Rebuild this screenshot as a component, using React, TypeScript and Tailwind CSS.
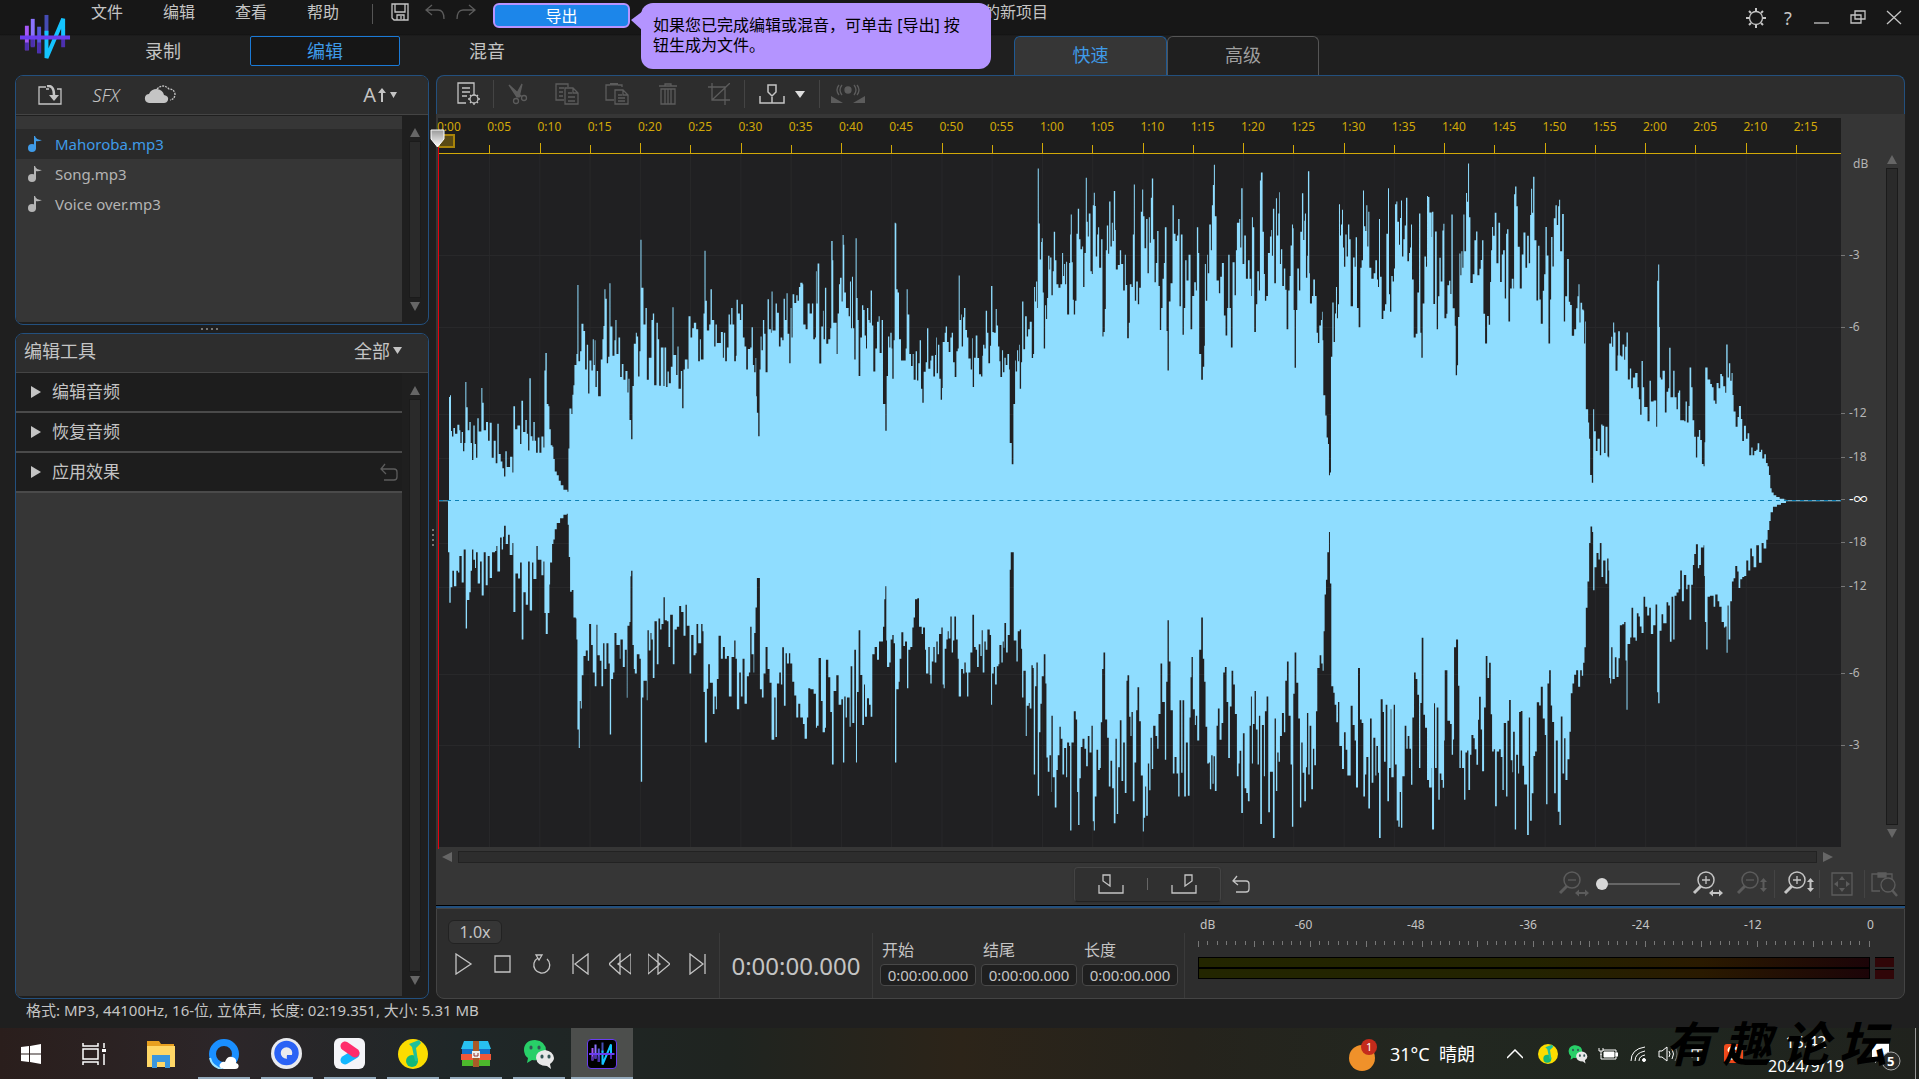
import React, { useState } from 'react';
import clsx from 'clsx';

/* ---------- data ---------- */

const menus = ['文件', '编辑', '查看', '帮助'];
const modes = ['录制', '编辑', '混音'];
const files = ['Mahoroba.mp3', 'Song.mp3', 'Voice over.mp3'];
const sections = ['编辑音频', '恢复音频', '应用效果'];

// one ruler label every five seconds
const rulerMarks = Array.from({ length: 28 }, (_, i) => {
  const s = i * 5;
  return `${Math.floor(s / 60)}:${String(s % 60).padStart(2, '0')}`;
});

// distance of each level from the one above it
const levels = [
  { label: 'dB', gap: 10, tick: false },
  { label: '-3', gap: 91, tick: true },
  { label: '-6', gap: 72, tick: true },
  { label: '-12', gap: 86, tick: true },
  { label: '-18', gap: 44, tick: true },
  { label: '-∞', gap: 42, tick: true },
  { label: '-18', gap: 43, tick: true },
  { label: '-12', gap: 44, tick: true },
  { label: '-6', gap: 87, tick: true },
  { label: '-3', gap: 72, tick: true },
];

const meterMarks = ['-60', '-48', '-36', '-24', '-12', '0'];

// Envelope of the clip: pairs of position and level, in three blocks that each have their own scale
const blocks = [
  {
    x: -8, y: -14, sx: 3, sy: 2.178, end: 1500,
    top: `24 785 54 785 57 560 60 556 63 634 66 646 70 627 75 640 82 620 88 632 91 660 95 636 99 678 103 660 106 527 109 582 113 632 118 614 122 660 126 697 130 622 134 662 138 692 142 606 146 635 151 635 154 540 157 572 161 632 168 614 174 655 179 616 185 692 191 655 197 704 202 618 206 684 212 700 217 715 222 733 226 678 230 712 236 712 240 690 247 724 250 580 255 630 262 622 270 662 274 568 279 636 286 610 290 640 294 676 298 519 302 645 307 655 310 614 314 655 318 681 323 648 328 681 334 646 340 670 343 502 346 464 350 575 355 580 358 630 362 665 367 668 370 695 374 722 380 730 386 742 392 752 400 762 412 766 415 672 418 585 424 597 427 555 430 534 433 490 439 466 442 316 445 482 450 460 454 400 460 416 465 500 470 446 474 552 478 480 484 502 488 434 491 490 494 436 496 538 500 503 504 558 508 558 512 478 517 434 520 405 523 325 526 346 530 486 534 472 538 312 541 406 547 470 553 436 556 392 559 466 565 430 570 516 575 488 580 522 586 503 592 550 595 520 598 610 603 652 607 536 611 444 617 420 620 428 624 515 628 460 631 217 634 322 640 402 646 366 650 522 656 474 660 474 664 392 668 378 672 534 679 398 683 434 687 535 692 452 696 452 700 536 703 452 708 538 712 504 716 530 722 494 727 364 730 468 738 512 742 450 745 542 752 503 756 584 760 500 764 478 772 498 775 384 781 430 786 410 791 398 798 412 804 482 809 434 812 478 817 478 820 378 823 241 826 350 830 415 837 402 841 325 845 392 852 450 856 402 860 442 865 442 872 418 878 474 881 420 885 482 890 452 895 380 899 402 903 366 907 402 912 482 917 470 919 348 923 378 929 392 933 358 938 430 943 450 948 500 953 455 960 452 964 408 968 490 972 506 976 475 978 558 980 594 984 645 988 500 991 428 994 458 998 392 1002 422 1006 506 1012 347 1016 412 1022 420 1024 330 1027 415 1033 415 1036 356 1040 376 1046 450 1051 430 1056 436 1060 346 1064 392 1069 334 1072 422 1077 486 1081 366 1084 430 1087 336 1092 355 1098 338 1102 350 1106 320 1110 311 1117 314 1119 402 1126 412 1132 356 1138 378 1143 378 1145 356 1149 434 1154 430 1157 286 1159 356 1162 269 1167 487 1173 406 1178 372 1180 434 1184 322 1188 444 1194 434 1200 410 1203 220 1207 262 1209 398 1215 398 1219 466 1222 378 1226 314 1229 300 1234 352 1237 207 1240 228 1242 332 1247 366 1252 366 1255 384 1259 308 1262 410 1265 298 1268 410 1272 478 1276 214 1279 344 1282 392 1285 514 1290 430 1295 360 1299 370 1303 426 1307 454 1310 366 1314 392 1318 398 1321 328 1325 404 1329 504 1335 454 1340 396 1345 384 1348 464 1354 392 1358 575 1365 633 1369 514 1373 428 1377 452 1380 420 1384 454 1386 520 1390 436 1393 180 1396 182 1398 325 1402 332 1406 434 1412 480 1420 480 1426 454 1429 325 1432 380 1437 466 1442 492 1447 466 1450 522 1456 460 1460 524 1464 486 1468 436 1472 542 1476 572 1480 505 1486 484 1490 410 1494 498`,
    bottom: `24 787 54 898 58 1008 62 974 67 938 72 972 79 938 84 942 88 906 95 964 101 892 107 1064 111 1002 118 985 122 938 126 892 130 914 135 932 138 898 143 966 150 918 155 992 161 898 167 970 173 906 179 954 186 898 195 895 199 884 202 940 210 866 215 892 219 864 222 840 227 880 234 860 239 904 247 878 250 1028 256 944 264 955 270 920 275 1088 280 985 287 1012 294 918 299 1025 306 920 310 956 319 884 323 914 330 914 334 948 340 918 343 1030 347 1076 353 1030 358 968 360 920 366 880 370 870 374 848 380 834 390 824 400 816 410 814 413 838 416 908 420 984 425 980 428 980 430 1040 437 1042 439 1088 442 1284 446 1324 449 1222 452 1238 455 1166 460 1124 467 1112 473 1134 477 1054 483 1100 488 1160 494 1190 499 1056 502 1122 509 1134 514 1190 519 1096 523 1152 529 1096 535 1140 539 1295 543 1174 549 1160 553 1074 559 1100 565 1100 569 1130 571 1088 578 1148 584 1110 590 1215 592 1058 598 1050 601 950 603 938 607 1100 611 1152 614 1162 620 1120 628 1130 632 1398 636 1214 640 1178 645 1178 650 1220 652 1068 656 1112 661 1074 664 1088 668 1172 673 1048 680 1142 685 1042 690 1066 694 1054 700 996 704 1046 710 1048 715 1104 720 1034 728 1142 733 1066 740 1060 747 1015 753 1028 760 1080 766 1012 770 1058 778 1162 783 1078 790 1122 796 1118 799 1054 804 1096 813 1054 817 1070 820 1202 824 1312 830 1195 834 1142 839 1182 848 1250 853 1212 857 1240 860 1174 865 1080 872 1130 878 1104 884 1130 890 1124 896 1212 904 1126 912 1090 916 1130 920 1240 927 1160 932 1212 937 1130 943 1228 950 1168 956 1160 960 1060 964 1120 970 1160 972 1074 976 1018 980 954 986 954 989 1196 995 1214 1000 1162 1006 1104 1012 1152 1018 1182 1024 1306 1032 1214 1036 1300 1040 1184 1047 1160 1052 1186 1056 1105 1061 1232 1066 1118 1070 1140 1076 1118 1080 1140 1086 1180 1092 1210 1098 1258 1104 1228 1110 1258 1118 1272 1123 1304 1130 1258 1134 1194 1140 1196 1150 1206 1157 1280 1160 1276 1165 1128 1172 1222 1177 1290 1184 1280 1187 1132 1194 1170 1200 1246 1205 1360 1210 1200 1218 1166 1225 1230 1233 1218 1238 1356 1242 1212 1246 1258 1250 1214 1258 1278 1261 1146 1266 1270 1272 1110 1277 1356 1280 1202 1285 1068 1290 1165 1296 1274 1301 1186 1304 1256 1310 1216 1316 1230 1321 1256 1326 1120 1333 1104 1340 1132 1346 1092 1354 1092 1358 1060 1362 1000 1365 972 1368 1090 1370 1148 1377 1138 1381 1088 1386 1078 1390 1096 1394 1356 1398 1196 1405 1180 1408 1130 1413 1072 1419 1102 1424 1092 1430 1194 1434 1110 1440 1104 1446 1062 1450 1040 1454 1000 1461 998 1466 1060 1474 1076 1478 1062 1484 1110 1487 1162 1494 1104 1498 1165`,
  },
  {
    x: 492, y: -14, sx: 3, sy: 2.178, end: 1500,
    top: `0 480 3 470 9 515 14 468 17 430 19 508 23 446 27 520 31 566 35 540 37 440 43 420 46 406 50 440 55 462 60 430 64 420 68 484 73 516 78 460 82 454 85 295 88 392 92 380 94 450 98 386 101 366 105 414 110 430 114 476 121 500 125 432 127 538 131 474 136 426 141 475 146 510 152 515 156 470 158 446 162 454 166 372 170 420 174 486 179 448 182 318 186 418 190 420 196 368 199 404 203 450 207 482 210 516 215 458 218 506 222 474 226 490 231 466 236 500 238 660 244 706 249 575 254 480 256 504 260 458 263 482 266 446 268 542 272 484 275 352 279 456 284 384 289 428 293 412 298 396 304 475 308 466 311 320 314 352 317 308 320 366 322 62 325 182 328 260 332 222 334 214 337 332 340 454 344 360 347 390 350 344 353 252 357 282 359 256 363 338 367 286 370 200 374 262 378 314 384 322 390 314 395 246 398 296 401 270 404 314 407 265 410 380 413 380 416 268 419 206 421 162 424 266 427 348 430 380 434 350 438 204 442 150 446 216 450 238 455 232 458 320 462 246 466 82 469 178 472 210 475 160 480 286 484 292 487 142 490 115 493 144 496 254 500 206 503 190 506 278 512 216 516 428 519 418 523 368 526 240 529 186 533 248 536 134 540 232 544 180 547 220 550 111 554 196 556 282 562 272 568 240 572 270 578 328 583 250 586 316 590 432 595 398 598 314 603 320 607 206 610 97 613 350 617 308 622 358 626 322 631 156 635 108 638 166 642 236 647 172 651 290 655 168 658 224 661 126 664 84 668 216 672 310 676 268 680 198 684 318 688 414 692 366 696 302 700 268 703 190 708 416 711 502 715 352 720 312 726 142 730 204 735 220 739 208 743 172 747 362 751 206 756 424 760 366 764 262 768 306 774 250 780 412 785 340 791 310 796 328 799 190 803 246 806 466 812 522 817 494 821 448 823 270 826 350 830 250 832 290 836 184 841 240 844 142 847 98 850 54 853 166 858 306 865 334 869 298 874 268 880 382 885 426 890 366 893 250 897 366 901 452 906 266 912 338 916 240 919 180 926 172 929 234 932 105 936 270 941 208 946 302 952 262 957 302 962 340 964 168 967 190 971 418 976 358 980 286 985 328 988 88 991 71 996 200 1000 292 1003 350 1007 340 1012 246 1018 210 1022 196 1024 252 1027 150 1031 312 1036 127 1039 208 1043 160 1046 114 1048 270 1051 238 1055 318 1060 280 1064 326 1068 412 1073 328 1077 296 1080 230 1084 184 1087 192 1089 370 1092 496 1096 370 1100 280 1105 328 1109 200 1114 116 1118 218 1121 176 1123 160 1126 300 1130 252 1132 68 1136 290 1138 356 1144 340 1148 304 1153 340 1158 420 1162 442 1166 404 1171 392 1174 374 1176 436 1178 556 1184 600 1188 648 1192 662 1195 730 1198 724 1201 472 1205 354 1209 440 1213 378 1216 320 1219 388 1222 358 1225 140 1228 208 1231 184 1234 152 1237 234 1240 276 1244 206 1248 254 1252 184 1256 216 1260 362 1267 256 1272 276 1275 212 1279 366 1284 408 1289 278 1293 262 1297 110 1300 188 1304 198 1307 142 1310 232 1313 156 1316 278 1322 302 1329 290 1334 262 1339 304 1342 320 1345 172 1348 298 1353 390 1358 372 1363 358 1367 204 1372 105 1375 336 1378 374 1382 296 1386 308 1390 280 1393 140 1397 134 1400 178 1405 228 1408 170 1411 132 1414 254 1418 216 1422 186 1426 126 1430 264 1435 246 1438 234 1441 184 1444 304 1449 430 1455 422 1460 332 1465 160 1469 420 1472 474 1476 356 1481 254 1486 276 1489 122 1492 124 1496 158`,
    bottom: `0 1184 4 1136 9 1104 13 1138 18 1092 22 1120 26 1076 33 1062 37 1186 40 1194 43 1108 48 1088 52 1070 55 1086 60 1038 64 1116 68 1090 72 1038 77 1088 82 1130 85 1212 92 1152 98 1162 102 1138 106 1160 110 1212 114 1160 120 1116 126 1034 131 1104 136 1110 140 1148 145 1098 150 1124 154 1068 157 1160 162 1092 166 1110 171 1066 178 1078 182 1230 185 1162 190 1148 194 1186 199 1146 204 1142 207 1100 213 1138 217 1092 220 1106 222 1052 227 1116 232 1078 238 936 241 898 248 898 250 1090 258 1136 262 1070 268 1066 272 1108 275 1214 279 1156 286 1298 289 1232 295 1226 298 1238 303 1144 307 1150 310 1382 314 1190 318 1138 322 1428 326 1290 330 1228 334 1168 340 1120 345 1184 348 1345 352 1376 357 1340 362 1420 363 1254 367 1388 373 1454 378 1372 382 1340 387 1278 391 1304 396 1382 401 1324 407 1388 410 1312 416 1320 419 1504 423 1312 430 1244 436 1262 440 1420 443 1492 447 1390 451 1322 456 1304 462 1326 467 1364 472 1298 477 1334 483 1276 487 1484 490 1504 493 1430 498 1328 503 1372 508 1368 511 1268 515 1152 519 1116 524 1262 530 1302 535 1408 540 1352 545 1412 550 1488 555 1304 559 1468 563 1366 568 1264 573 1396 578 1312 583 1422 588 1178 591 1166 596 1256 600 1298 603 1246 607 1440 612 1356 617 1242 621 1192 626 1266 631 1384 637 1506 640 1476 644 1408 647 1472 652 1358 656 1416 660 1302 664 1370 668 1276 675 1298 680 1326 684 1250 690 1140 695 1224 703 1350 707 1180 711 1046 715 1136 720 1242 727 1380 732 1344 738 1380 743 1430 747 1220 752 1378 756 1220 761 1430 766 1312 772 1428 777 1258 780 1170 783 1126 787 1240 793 1274 796 1254 800 1308 806 1110 812 1040 817 1130 821 1180 825 1278 830 1358 835 1356 838 1414 842 1340 846 1402 849 1342 853 1418 858 1276 862 1238 867 1306 873 1270 878 1160 883 1148 888 1224 893 1346 898 1234 903 1156 908 1186 913 1250 919 1386 924 1358 927 1330 932 1466 937 1292 942 1412 947 1422 952 1440 957 1276 961 1212 964 1358 967 1272 972 1200 976 1284 981 1360 985 1254 989 1490 994 1274 1000 1386 1003 1244 1008 1212 1013 1464 1018 1376 1022 1376 1027 1520 1032 1260 1036 1418 1040 1334 1044 1354 1048 1298 1054 1248 1060 1290 1064 1178 1069 1136 1074 1254 1080 1360 1084 1496 1088 1206 1092 1116 1097 1182 1103 1260 1108 1454 1112 1312 1116 1378 1121 1440 1126 1366 1129 1248 1133 1382 1137 1276 1142 1414 1147 1326 1151 1362 1156 1244 1160 1150 1167 1122 1172 1140 1176 1156 1179 1070 1182 990 1186 958 1190 898 1195 854 1198 966 1202 1190 1208 1204 1212 1230 1217 1268 1222 1224 1226 1320 1234 1370 1240 1290 1245 1328 1250 1384 1255 1384 1260 1232 1266 1274 1272 1308 1276 1410 1282 1150 1288 1262 1293 1270 1298 1430 1303 1382 1307 1344 1313 1456 1318 1260 1323 1400 1328 1302 1334 1384 1337 1320 1342 1378 1345 1520 1350 1218 1356 1246 1360 1354 1365 1230 1370 1440 1375 1368 1380 1240 1382 1388 1389 1230 1393 1360 1398 1482 1403 1496 1407 1420 1411 1498 1415 1386 1422 1276 1427 1326 1431 1298 1436 1326 1441 1404 1445 1258 1450 1160 1455 1174 1460 1208 1465 1368 1469 1226 1473 1084 1478 1252 1483 1280 1489 1394 1495 1410`,
  },
  {
    x: 982, y: -154, sx: 3, sy: 1.823, end: 1260,
    top: `30 432 34 386 38 554 43 422 48 600 52 540 56 470 60 513 65 420 68 408 71 580 77 572 80 520 85 512 89 536 92 391 96 562 102 594 105 684 109 666 112 578 116 462 119 502 122 458 125 488 128 391 131 458 136 352 139 368 142 298 145 396 149 516 156 500 161 438 166 422 170 502 176 490 180 474 184 438 188 572 193 626 199 576 204 592 208 514 211 456 214 414 217 430 222 388 227 480 233 406 238 514 243 464 247 456 252 544 256 426 259 418 263 586 268 526 273 508 278 526 280 354 283 340 287 376 291 450 297 526 303 464 308 424 314 488 319 430 324 480 328 392 331 344 334 388 337 322 341 438 347 548 352 448 356 546 360 590 366 530 370 500 374 414 378 466 383 626 388 546 391 432 395 486 399 398 404 374 408 410 412 376 415 364 418 458 424 390 429 586 433 540 439 472 444 550 448 556 453 612 460 600 466 562 470 540 473 518 476 588 479 552 484 564 488 566 490 626 493 586 495 746 502 770 505 800 508 866 513 880 517 746 520 786 525 822 530 800 537 830 541 774 545 776 550 826 554 778 560 832 563 834 565 626 571 614 574 632 577 588 580 606 584 676 590 648 592 604 597 648 601 650 605 628 610 656 613 632 617 606 621 692 627 672 631 708 636 688 643 680 650 706 654 728 658 756 662 658 666 706 670 742 680 768 686 694 690 732 698 730 706 778 709 512 712 482 715 596 717 688 720 692 725 676 732 752 737 714 742 708 745 634 749 724 755 724 757 676 761 724 767 746 771 716 774 712 778 766 784 766 790 768 794 732 798 770 803 740 806 670 811 706 815 766 820 796 825 834 829 796 834 784 838 802 843 846 848 850 851 806 853 670 860 692 868 700 873 706 878 730 883 736 887 698 893 708 898 682 903 686 907 704 913 716 916 628 920 688 924 662 928 694 932 680 935 720 938 750 944 778 950 760 954 740 960 764 964 804 969 776 975 800 980 790 985 830 991 816 995 830 1000 822 1006 820 1010 808 1015 824 1020 820 1024 836 1030 828 1035 844 1040 850 1044 866 1048 890 1052 898 1058 903 1066 906 1076 909 1090 911 1096 912 1200 912`,
    bottom: `30 1400 34 1512 40 1282 43 1400 48 1290 53 1458 57 1410 62 1422 66 1436 70 1350 72 1222 78 1222 80 1314 88 1320 93 1376 97 1348 100 1180 106 1166 112 1250 116 1400 120 1368 124 1400 130 1458 134 1372 139 1368 143 1440 148 1376 152 1340 158 1346 162 1366 167 1394 172 1312 175 1270 180 1330 184 1406 190 1290 195 1196 200 1236 205 1208 210 1302 214 1370 219 1366 223 1470 228 1370 235 1366 240 1380 245 1440 249 1318 256 1452 260 1314 265 1276 270 1386 275 1408 277 1334 282 1512 286 1376 292 1410 295 1298 300 1296 305 1396 310 1430 315 1430 319 1522 324 1308 328 1496 333 1446 338 1378 343 1370 348 1280 355 1286 360 1252 366 1310 372 1340 376 1466 380 1246 385 1222 390 1286 394 1316 400 1446 405 1350 411 1480 416 1504 420 1306 425 1410 430 1346 434 1422 440 1384 446 1334 450 1264 455 1246 460 1230 466 1222 472 1252 478 1222 483 1232 487 1208 491 1180 495 1108 500 1060 505 990 509 960 514 970 517 1076 521 1034 527 1008 533 1020 537 990 542 1052 547 1022 554 1064 559 1018 563 1040 565 1236 568 1246 571 1180 575 1238 582 1198 587 1234 593 1200 597 1140 604 1138 610 1134 614 1204 617 1294 620 1174 628 1162 632 1108 637 1162 644 1168 648 1118 653 1124 657 1142 662 1154 668 1088 673 1106 679 1122 685 1108 690 1156 697 1140 704 1102 709 1262 712 1282 716 1150 722 1120 727 1136 737 1098 742 1104 747 1170 752 1088 757 1166 761 1086 767 1080 773 1074 778 1040 783 1096 789 1048 796 1074 800 1066 806 1130 811 1066 816 1030 820 1010 825 992 831 1036 835 1030 840 998 848 994 850 1050 852 1134 856 1184 860 1088 867 1086 872 1086 878 1106 883 1084 890 1096 895 1106 902 1134 909 1144 913 1142 917 1190 920 1104 923 1166 928 1096 933 1060 938 1054 943 1032 949 1042 953 1072 958 1056 964 1052 970 1050 976 1022 982 1040 988 1000 993 1014 998 1034 1006 994 1014 1026 1022 990 1028 1000 1036 984 1040 966 1045 950 1049 934 1056 924 1068 920 1080 917 1095 914 1200 914`,
  },
];

type Block = (typeof blocks)[number];

// stepped outline, the top edge from left to right and the bottom edge back
function envelope(b: Block) {
  const parse = (s: string) => {
    const n = s.split(' ').map(Number);
    const points: [number, number][] = [];
    for (let i = 0; i < n.length; i += 2) {
      points.push([b.x + n[i] / b.sx, b.y + n[i + 1] / b.sy]);
    }
    return points;
  };
  // runs a little into the next block so that no seam shows
  const end = b.x + b.end / b.sx + 1;
  const walk = (points: [number, number][]) => {
    const out: [number, number][] = [];
    points.forEach(([x, y], i) => {
      out.push([x, y], [i + 1 < points.length ? points[i + 1][0] : end, y]);
    });
    return out;
  };
  const outline = [...walk(parse(b.top)), ...walk(parse(b.bottom)).reverse()];
  return 'M' + outline.map(([x, y]) => `${x.toFixed(2)} ${y.toFixed(2)}`).join('L') + 'Z';
}

/* ---------- small pieces ---------- */

type IconProps = { w?: number; h?: number; className?: string; children: React.ReactNode };

function Icon({ w = 24, h = 24, className, children }: IconProps) {
  return (
    <svg
      width={w}
      height={h}
      viewBox={`0 0 ${w} ${h}`}
      fill="none"
      stroke="currentColor"
      strokeWidth="1.3"
      className={clsx('shrink-0', className)}
      aria-hidden="true"
    >
      {children}
    </svg>
  );
}

type ToolProps = { label: string; width: string; dim?: boolean; children: React.ReactNode };

function Tool({ label, width, dim, children }: ToolProps) {
  return (
    <button
      aria-label={label}
      className={clsx('flex h-8 shrink-0 items-center justify-center', width, dim ? 'text-[#5c5c5c]' : 'text-[#c4c4c4]')}
    >
      {children}
    </button>
  );
}

function Arrow({ dir }: { dir: 'up' | 'down' | 'left' | 'right' }) {
  const d = { up: 'M0 10L5 1l5 9z', down: 'M0 0L5 9l5-9z', left: 'M10 0L0 5l10 5z', right: 'M0 0l10 5L0 10z' }[dir];
  return (
    <svg width="10" height="10" viewBox="0 0 10 10" fill="#666" className="shrink-0" aria-hidden="true">
      <path d={d} />
    </svg>
  );
}

function VerticalScroll({ className }: { className?: string }) {
  return (
    <div className={clsx('flex shrink-0 flex-col items-center gap-1', className)}>
      <Arrow dir="up" />
      <div className="w-3 flex-1 border border-[#1b1b1b] bg-[#2a2a2a]" />
      <Arrow dir="down" />
    </div>
  );
}

function Logo({ size }: { size: number }) {
  return (
    <svg width={size} height={size} viewBox="0 0 52 46" fill="none" strokeWidth="4" aria-hidden="true">
      <path d="M7 11v25" stroke="#a557f7" />
      <path d="M13 4v28" stroke="#8b74ff" />
      <path d="M19.5 12v27" stroke="#5458d8" />
      <path d="M7 28v8M13 24v9M19.5 28v11M44 14v19" stroke="#4c2fae" />
      <path d="M27 0v20" stroke="#454cb5" />
      <path d="M27 16v28L44 4v20" stroke="#14c4ff" strokeLinejoin="bevel" />
      <path d="M0 23h51" stroke="#6a3df0" />
    </svg>
  );
}

/* ---------- header ---------- */

function Header() {
  const [mode, setMode] = useState('编辑');
  return (
    <header className="flex shrink-0 bg-[linear-gradient(#171717_34px,#111_34px,#1f1f1f_36px)]">
      <div className="w-[71px] shrink-0 pt-3 pl-5">
        <Logo size={51} />
      </div>
      <div className="flex-1">
        <div className="flex h-9 items-start">
          <nav className="flex">
            {menus.map((m) => (
              <button key={m} className="h-6 w-[72px] text-base leading-6">{m}</button>
            ))}
          </nav>
          <div className="mt-1 ml-[13px] h-5 w-px bg-[#555]" />
          <div className="flex h-6 items-center pl-3">
            <Tool label="保存" width="w-[30px]">
              <Icon w={18} h={18}>
                <path d="M1 1h16v16H3l-2-2zM4 1v8h10V1M6 17v-5h7v5M10 13v3" />
              </Icon>
            </Tool>
            <Tool label="撤消" width="w-10" dim>
              <Icon w={20} h={16}>
                <path d="M7 1L1 6l6 5M1 6h12q6 0 6 9" />
              </Icon>
            </Tool>
            <Tool label="重做" width="w-[22px]" dim>
              <Icon w={20} h={16}>
                <path d="M13 1l6 5-6 5M19 6H7q-6 0-6 9" />
              </Icon>
            </Tool>
          </div>
          <div className="relative mt-[3px] ml-4">
            <button className="h-[25px] w-[137px] rounded-md border-2 border-[#b794ff] bg-[#1c86ea] text-base leading-5 text-white">
              导出
            </button>
            <div className="absolute top-0 left-[148px] z-10 h-[66px] w-[350px] rounded-xl bg-[#b494ff] pt-3 pr-6 pl-3 text-base leading-5 text-black">
              如果您已完成编辑或混音，可单击 [导出] 按钮生成为文件。
              <svg className="absolute top-2 -left-[10px]" width="12" height="20" viewBox="0 0 12 20" fill="#b494ff" aria-hidden="true">
                <path d="M12 0L0 9l12 11z" />
              </svg>
            </div>
          </div>
          <h1 className="ml-[354px] text-base leading-6">的新项目</h1>
          <div className="ml-auto flex h-9 items-center pr-[5px]">
            <Tool label="设置" width="w-9">
              <Icon w={20} h={20}>
                <circle cx="10" cy="10" r="6.5" />
                <path d="M10 0v3M10 17v3M0 10h3M17 10h3M3 3l2 2M15 15l2 2M17 3l-2 2M5 15l-2 2" strokeWidth="2" />
              </Icon>
            </Tool>
            <button className="w-7 text-lg leading-6">?</button>
            <Tool label="最小化" width="w-10">
              <Icon w={16} h={16}><path d="M0 13h15" /></Icon>
            </Tool>
            <Tool label="还原" width="w-8">
              <Icon w={16} h={16}><path d="M5 1h10v8H5zM1 5h10v8H1z" /></Icon>
            </Tool>
            <Tool label="关闭" width="w-10">
              <Icon w={16} h={16}><path d="M1 1l14 13M15 1L1 14" /></Icon>
            </Tool>
          </div>
        </div>
        <div className="flex h-[39px] items-start gap-3 pl-[17px]">
          {modes.map((m) => (
            <button
              key={m}
              onClick={() => setMode(m)}
              className={clsx(
                'h-[30px] w-[150px] rounded-xs border text-lg leading-6',
                m === mode ? 'border-[#1b7ad6] bg-[#161616] text-[#3f9be8]' : 'border-transparent',
              )}
            >
              {m}
            </button>
          ))}
          <div className="ml-[440px] flex self-stretch text-lg">
            <button className="w-[153px] rounded-t-md border border-b-0 border-[#1f5a94] bg-[#363636] pb-0.5 text-[#3f9be8]">快速</button>
            <button className="w-[152px] rounded-t-md border border-b-0 border-[#555] pb-0.5 text-[#a0a0a0]">高级</button>
          </div>
        </div>
      </div>
    </header>
  );
}

/* ---------- left column ---------- */

function FilePanel() {
  const [current, setCurrent] = useState(files[0]);
  return (
    <section className="flex h-[250px] shrink-0 flex-col overflow-hidden rounded-lg border border-[#23507e] bg-[#1f1f1f]">
      <div className="flex h-[39px] shrink-0 items-center border-b border-[#444] bg-[#2d2d2d] px-3">
        <Tool label="导入" width="w-11">
          <Icon w={24} h={20}>
            <path d="M8 2H1v17h22V4h-4M8 4h3" />
            <path d="M9 1q7-1 7 9" strokeWidth="2.5" />
            <path d="M11 10h10l-5 6z" fill="currentColor" stroke="none" />
          </Icon>
        </Tool>
        <button className="w-[68px] text-lg font-light italic">SFX</button>
        <Tool label="云端" width="w-10">
          <Icon w={32} h={20}>
            <path d="M13 4q6-6 12 0 5 0 6 5 0 5-5 6" strokeDasharray="2 1" />
            <path d="M5 18q-5-1-4-6 1-3 4-3 2-5 8-5 6 1 7 6 5 1 4 5-1 3-4 3z" fill="currentColor" stroke="none" />
          </Icon>
        </Tool>
        <button aria-label="字体大小" className="mr-4 ml-auto flex items-center gap-0.5 text-xl leading-8">
          A
          <Icon w={22} h={14}>
            <path d="M4 3v11" strokeWidth="2" />
            <path d="M0 5l4-5 4 5zM12 4h7l-3.5 6z" fill="currentColor" stroke="none" />
          </Icon>
        </button>
      </div>
      <div className="flex min-h-0 flex-1">
        <ul className="mt-px mb-0.5 flex-1 bg-[#363636] pt-[13px]">
          {files.map((f) => (
            <li key={f}>
              <button
                onClick={() => setCurrent(f)}
                className={clsx(
                  'flex h-[30px] w-full items-center gap-[13px] pl-3 text-[15px]',
                  f === current ? 'bg-[#2a2a2a] text-[#3f9be8]' : 'text-[#b4b4b4]',
                )}
              >
                <svg width="14" height="16" viewBox="0 0 14 16" fill="currentColor" aria-hidden="true">
                  <circle cx="4" cy="12" r="4" />
                  <path d="M6 12V0h1q1 4 7 4-4 2-6 1v8z" />
                </svg>
                {f}
              </button>
            </li>
          ))}
        </ul>
        <VerticalScroll className="w-[26px] py-3" />
      </div>
    </section>
  );
}

function ToolsPanel() {
  return (
    <section className="flex min-h-0 flex-1 flex-col overflow-hidden rounded-lg border border-[#23507e] bg-[#1f1f1f]">
      <div className="flex h-[39px] shrink-0 items-center justify-between border-b border-[#444] bg-[#2d2d2d] pr-6 pb-1 pl-2">
        <h2 className="text-lg">编辑工具</h2>
        <label className="flex items-center">
          <select aria-label="筛选" className="appearance-none bg-transparent text-lg leading-6">
            <option>全部</option>
          </select>
          <svg width="14" height="8" viewBox="0 0 14 8" fill="#c4c4c4" aria-hidden="true"><path d="M3 0h9L7.5 7z" /></svg>
        </label>
      </div>
      <div className="flex min-h-0 flex-1">
        <div className="mb-0.5 flex-1 bg-[#363636]">
          {sections.map((s, i) => (
            <button key={s} className="flex h-10 w-full items-center border-b-2 border-[#4a4a4a] bg-[#1d1d1d] pr-1 pl-[15px] text-[17px]">
              <svg width="10" height="12" viewBox="0 0 10 12" fill="#c4c4c4" className="mr-[11px]" aria-hidden="true">
                <path d="M0 0l10 6-10 6z" />
              </svg>
              {s}
              {i === 2 && (
                <Icon w={18} h={18} className="ml-auto text-[#5c5c5c]">
                  <path d="M5 1L1 6l5 5M1 6h13q3 0 3 3v5q0 3-3 3H4" />
                </Icon>
              )}
            </button>
          ))}
        </div>
        <VerticalScroll className="w-[26px] py-3" />
      </div>
    </section>
  );
}

/* ---------- editor ---------- */

function EditToolbar() {
  const divider = <div className="h-7 w-px bg-[#444]" />;
  return (
    <div className="flex h-[39px] shrink-0 items-center rounded-t-lg border border-b-0 border-[#23507e] bg-[#2d2d2d] pb-0.5 pl-2">
      <Tool label="属性" width="w-12">
        <Icon w={24} h={24}>
          <path d="M9 21H1V1h16v10M5 6h8M5 10h8M5 14h5" />
          <circle cx="17" cy="17" r="4" />
          <path d="M17 11v2M17 21v2M11 17h2M21 17h2M13 13l1 1M20 20l1 1M21 13l-1 1M13 21l1-1" />
        </Icon>
      </Tool>
      {divider}
      <Tool label="剪切" width="w-12" dim>
        <Icon w={20} h={22}>
          <path d="M1 2l8 12 4-1zM14 1L8 12l3 2z" fill="currentColor" />
          <circle cx="8" cy="18" r="2.5" />
          <circle cx="16" cy="15" r="2.5" />
        </Icon>
      </Tool>
      <Tool label="复制" width="w-[50px]" dim>
        <Icon w={24} h={22}>
          <path d="M9 17H1V1h12v3M4 5h5M4 9h4M4 13h4M10 5h8l5 5v11H10zM13 10h4M13 14h7M13 18h7M18 5v5h5" />
        </Icon>
      </Tool>
      <Tool label="粘贴" width="w-[50px]" dim>
        <Icon w={24} h={22}>
          <path d="M9 17H1V2h4M13 2h4v2M10 7h8l5 5v9H10zM13 12h4M13 15h7M13 18h7M18 7v5h5" />
          <path d="M5 1h8" strokeWidth="3" />
        </Icon>
      </Tool>
      <Tool label="删除" width="w-[52px]" dim>
        <Icon w={18} h={22}>
          <path d="M0 3h18M6 3V1h6v2M2 6v15h14V6zM6 6v15M9 6v15M12 6v15" />
        </Icon>
      </Tool>
      <Tool label="裁剪" width="w-[50px]" dim>
        <Icon w={22} h={22}>
          <path d="M4 0v17h18M0 4h17v18M22 0L4 17" />
        </Icon>
      </Tool>
      {divider}
      <Tool label="标记" width="w-[54px]">
        <Icon w={26} h={20}>
          <path d="M9 1h8v7l-4 4-4-4zM1 12v7h24v-7M13 13v6" strokeWidth="1.5" />
        </Icon>
      </Tool>
      <button aria-label="标记选项" className="-ml-1 flex w-6 items-start">
        <svg width="10" height="7" viewBox="0 0 10 7" fill="#ddd" aria-hidden="true"><path d="M0 0h10L5 7z" /></svg>
      </button>
      {divider}
      <Tool label="降噪" width="w-[56px]" dim>
        <Icon w={34} h={20}>
          <path d="M0 19v-7l12 7zM34 19v-7l-12 7z" fill="currentColor" stroke="none" />
          <circle cx="17" cy="6" r="3" fill="currentColor" />
          <path d="M11 1q-4 5 0 10M8 1q-4 5 0 10M23 1q4 5 0 10M26 1q4 5 0 10" />
        </Icon>
      </Tool>
    </div>
  );
}

function Ruler() {
  return (
    <div className="relative ml-[2px] flex h-9 border-b border-[#d2a908] bg-[#1d1d1d]">
      {rulerMarks.map((m, i) => (
        <div key={m} className={clsx('flex min-w-0 basis-0 flex-col justify-between pt-px', i === 27 ? 'grow-[46]' : 'grow-[50]')}>
          <span className="-ml-px w-10 text-xs leading-4 text-[#d2a908]">{m}</span>
          <span className={clsx('ml-px w-px bg-[#d2a908]', i === 0 ? 'h-0' : i % 2 ? 'h-2' : 'h-2.5')} />
        </div>
      ))}
      {/* playhead */}
      <div className="absolute top-4 left-0 h-3.5 w-[17px] border-2 border-[#a8830a] bg-[#5a4a14]" />
      <svg className="absolute top-[11px] -left-2 z-10" width="15" height="18" viewBox="0 0 15 18" aria-hidden="true">
        <defs>
          <linearGradient id="head" x1="0" x2="0" y1="0" y2="1">
            <stop offset="0" stopColor="#999" />
            <stop offset="1" stopColor="#fff" />
          </linearGradient>
        </defs>
        <path d="M1 1h13v9l-6.5 8L1 10z" fill="url(#head)" stroke="#fff" />
      </svg>
      <div className="absolute top-[29px] left-0 z-10 h-[702px] w-px bg-red-600" />
    </div>
  );
}

function Waveform() {
  return (
    <div className="ml-[2px] min-h-0 flex-1 bg-[#202022]">
      <svg className="block h-full w-full" viewBox="0 0 1402 693" preserveAspectRatio="none" role="img" aria-label="Mahoroba.mp3">
        <g stroke="#28282a" strokeWidth="1">
          {rulerMarks.slice(1).map((m, i) => (
            <path key={m} d={`M${51.5 + i * 50.23} 0v693`} />
          ))}
          {[101.5, 173.5, 260.5, 304.5, 389.5, 433.5, 520.5, 591.5].map((y) => (
            <path key={y} d={`M0 ${y}h1402`} />
          ))}
        </g>
        <g fill="#8fddff">
          {blocks.map((b) => (
            <path key={b.x} d={envelope(b)} />
          ))}
        </g>
        <path d="M1 346.5h1401" stroke="#0c7fb4" strokeWidth="1" strokeDasharray="4 4" />
      </svg>
    </div>
  );
}

function LevelScale() {
  return (
    <div className="flex w-[38px] shrink-0 flex-col pt-9 text-xs text-[#b4b4b4]">
      {levels.map((l, i) => (
        <div key={i} className="flex basis-0 items-end" style={{ flexGrow: l.gap }}>
          <span className={clsx('flex h-0 items-center gap-1', l.label === '-∞' && 'text-sm text-white')}>
            <span className={clsx('h-px w-1', l.tick && 'bg-[#777]')} />
            <span className={clsx(!l.tick && 'pl-1')}>{l.label}</span>
          </span>
        </div>
      ))}
      <div className="basis-0" style={{ flexGrow: 102 }} />
    </div>
  );
}

function Magnifier({ plus, vertical }: { plus?: boolean; vertical?: boolean }) {
  return (
    <Icon w={32} h={28}>
      <circle cx="14" cy="10" r="8" strokeWidth="1.5" />
      <path d={plus ? 'M10 10h8M14 6v8' : 'M10 10h8'} />
      <path d="M9 16l-7 7" strokeWidth="3" />
      {vertical ? (
        <path d="M24 12l3.5-4 3.5 4h-2.5v6H31l-3.5 4-3.5-4h2.5v-6z" fill="currentColor" stroke="none" />
      ) : (
        <path d="M17 23l4-3.5v2.5h6v-2.5l4 3.5-4 3.5V24h-6v2.5z" fill="currentColor" stroke="none" />
      )}
    </Icon>
  );
}

function SelectionBar() {
  return (
    <div className="flex h-[42px] shrink-0 items-center">
      <div className="flex grow-[785] basis-0 items-center justify-end">
        <div className="flex h-[35px] items-center rounded border border-[#444] border-b-[#222] bg-[#303030] px-3 shadow">
          <Tool label="选区开始" width="w-12">
            <Icon w={26} h={20}>
              <path d="M5 1h7v11l-7-5zM1 11v8h24v-8" />
            </Icon>
          </Tool>
          <div className="mx-3 h-3 w-px bg-[#666]" />
          <Tool label="选区结束" width="w-12">
            <Icon w={26} h={20}>
              <path d="M21 1h-7v11l7-5zM1 11v8h24v-8" />
            </Icon>
          </Tool>
        </div>
      </div>
      <div className="flex grow-[684] basis-0 items-center">
        <Tool label="重置选区" width="w-10">
          <Icon w={18} h={18}>
            <path d="M5 1L1 6l5 4M1 6h13q3 0 3 3v5q0 3-3 3H4" />
          </Icon>
        </Tool>
        <div className="ml-auto flex items-center">
          <Tool label="水平缩小" width="w-8" dim><Magnifier /></Tool>
          <input
            type="range"
            aria-label="水平缩放"
            defaultValue={0}
            className="mx-1.5 h-4 w-[84px] appearance-none bg-[linear-gradient(#666,#666)] bg-[length:100%_2px] bg-center bg-no-repeat [&::-webkit-slider-thumb]:h-3 [&::-webkit-slider-thumb]:w-3 [&::-webkit-slider-thumb]:appearance-none [&::-webkit-slider-thumb]:rounded-full [&::-webkit-slider-thumb]:bg-[#d8d8d8]"
          />
          <Tool label="水平放大" width="w-11"><Magnifier plus /></Tool>
          <Tool label="垂直缩小" width="w-11" dim><Magnifier vertical /></Tool>
          <div className="mr-1 h-7 w-px bg-[#444]" />
          <Tool label="垂直放大" width="w-10"><Magnifier plus vertical /></Tool>
          <div className="h-7 w-px bg-[#444]" />
          <Tool label="适合窗口" width="w-11" dim>
            <Icon w={22} h={24}>
              <path d="M1 1h20v22H1z" />
              <path d="M11 4l3 4H8zM11 20l3-4H8zM3 12l4-3v6zM19 12l-4-3v6z" fill="currentColor" stroke="none" />
            </Icon>
          </Tool>
          <div className="h-7 w-px bg-[#444]" />
          <Tool label="缩放到选区" width="w-10" dim>
            <Icon w={28} h={26}>
              <path d="M7 3H1v17h8M15 3h6v5" />
              <path d="M7 2h8v4H7z" fill="currentColor" />
              <circle cx="17" cy="14" r="7" />
              <path d="M21 19l5 6" strokeWidth="2.5" />
            </Icon>
          </Tool>
        </div>
      </div>
    </div>
  );
}

/* ---------- transport ---------- */

const transport = [
  { label: '播放', d: 'M3 1v20l15-10z' },
  { label: '停止', d: 'M3 3h15v16H3z' },
  { label: '循环', d: 'M7 5a8 8 0 1 0 9 1M5 2l6 0-3 5z' },
  { label: '开头', d: 'M3 1v20M18 1v20L5 11z' },
  { label: '快退', d: 'M11 1v20L0 11zM22 1v20L9 11z' },
  { label: '快进', d: 'M0 1v20l12-10zM10 1v20l12-10z' },
  { label: '结尾', d: 'M18 1v20M3 1v20l13-10z' },
];

function Player() {
  return (
    <section className="flex h-[91px] shrink-0 rounded-b-lg border border-[#444] bg-[#2d2d2d]">
      <div className="w-[282px] shrink-0 pt-[11px] pl-[7px]">
        <button className="ml-1 h-6 w-[54px] rounded-md border border-[#222] bg-[#363636] text-base leading-5">1.0x</button>
        <div className="mt-1 flex">
          {transport.map((t) => (
            <Tool key={t.label} label={t.label} width="w-[39px]">
              <Icon w={22} h={22}><path d={t.d} /></Icon>
            </Tool>
          ))}
        </div>
      </div>
      <div className="mt-6 flex w-[154px] shrink-0 items-center justify-center border-x border-[#3a3a3a] text-2xl">
        <output>0:00:00.000</output>
      </div>
      <div className="mt-[29px] flex w-[311px] shrink-0 gap-[5px] pl-[7px]">
        {['开始', '结尾', '长度'].map((f) => (
          <label key={f} className="flex flex-col text-base leading-6">
            <span className="pl-0.5">{f}</span>
            <input
              defaultValue="0:00:00.000"
              className="mt-0.5 h-[22px] w-24 rounded-sm border border-[#484848] bg-[#1f1f1f] text-center text-[15px]"
            />
          </label>
        ))}
      </div>
      <div className="mt-6 w-px shrink-0 bg-[#3a3a3a]" />
      <div className="flex-1 pt-2 pr-2.5 pl-[13px]">
        <div className="flex pr-5 pl-0.5 text-xs leading-4">
          {meterMarks.map((m, i) => (
            <span key={m} className="flex flex-1 justify-end">
              {i === 0 && <span className="mr-auto">dB</span>}
              {m}
            </span>
          ))}
        </div>
        <div className="mt-2 flex justify-between pr-6">
          {Array.from({ length: 73 }, (_, i) => (
            <span key={i} className={clsx('w-px bg-[#777]', i % 6 ? 'h-1' : 'h-1.5')} />
          ))}
        </div>
        <div className="mt-2.5 flex gap-[5px]">
          <div className="flex-1 border border-black bg-black">
            <div className="mb-0.5 h-[9px] bg-[linear-gradient(90deg,#232600,#232300_50%,#2a1a00_75%,#1c0408)]" />
            <div className="h-[9px] bg-[linear-gradient(90deg,#232600,#232300_50%,#2a1a00_75%,#1c0408)]" />
          </div>
          <div className="w-[19px]">
            <div className="mb-0.5 h-2.5 border-t border-black bg-[#300608]" />
            <div className="h-2.5 border-t border-black bg-[#300608]" />
          </div>
        </div>
      </div>
    </section>
  );
}

function Editor() {
  return (
    <main className="flex min-w-0 flex-1 flex-col">
      <EditToolbar />
      <div className="flex min-h-0 flex-1 flex-col bg-[#363636] pt-1">
        <div className="flex min-h-0 flex-1">
          <div className="flex min-w-0 flex-1 flex-col">
            <Ruler />
            <Waveform />
          </div>
          <LevelScale />
          <VerticalScroll className="w-[26px] pt-9 pb-2" />
        </div>
        <div className="mt-1 mr-[72px] ml-1.5 flex h-3 shrink-0 items-center gap-1.5">
          <Arrow dir="left" />
          <div className="h-3 flex-1 border border-[#222] bg-[#2d2d2d]" />
          <Arrow dir="right" />
        </div>
        <SelectionBar />
      </div>
      <div className="h-[3px] shrink-0 border-t border-black bg-[#23507e]" />
      <Player />
    </main>
  );
}

/* ---------- taskbar ---------- */

function NoteDisc({ size }: { size: number }) {
  return (
    <svg width={size} height={size} viewBox="0 0 30 30" aria-hidden="true">
      <circle cx="15" cy="15" r="15" fill="#fbdc00" />
      <circle cx="14" cy="22" r="6" fill="#14b878" />
      <path d="M11 5l10-4 2 3-5 5 2 13h-3L14 8z" fill="#1fc09a" />
    </svg>
  );
}

function Bubbles({ size }: { size: number }) {
  return (
    <svg width={size} height={size} viewBox="0 0 32 32" aria-hidden="true">
      <path d="M12 2C5 2 1 6 1 12q0 5 4 8l-1 5 5-3q12 2 14-9Q23 3 12 2z" fill="#28cf68" />
      <path d="M22 12q-9 1-9 8 1 8 11 8l4 3-1-5q4-3 4-6-1-7-9-8z" fill="#e8e8e8" />
      <path d="M8 9v1M16 9v1M19 18v1M26 18v1" stroke="#355" strokeWidth="3" strokeLinecap="round" />
    </svg>
  );
}

const apps = [
  {
    name: '文件资源管理器', open: false,
    art: (
      <svg width="28" height="28" viewBox="0 0 28 28" aria-hidden="true">
        <path d="M0 1h12l2 3h13v20H0z" fill="#e8a020" />
        <path d="M0 6h28v21H0z" fill="#ffd766" />
        <path d="M5 28V15h18v13h-5v-6h-8v6z" fill="#3a96dd" />
      </svg>
    ),
  },
  {
    name: 'QQ浏览器', open: true,
    art: (
      <svg width="30" height="30" viewBox="0 0 30 30" aria-hidden="true">
        <circle cx="15" cy="15" r="11.5" fill="none" stroke="#1a8fff" strokeWidth="7" />
        <path d="M1 19q2 9 12 11" stroke="#9be4ff" strokeWidth="2" fill="none" />
        <path d="M15 30q-6-1-4-5 2-3 5-2 2-6 7-5 5 1 4 6 4 1 2 5-1 1-3 1z" fill="#fff" />
      </svg>
    ),
  },
  {
    name: '夸克', open: true,
    art: (
      <svg width="31" height="31" viewBox="0 0 31 31" aria-hidden="true">
        <circle cx="15.5" cy="15.5" r="15.5" fill="#e9eaee" />
        <circle cx="15.5" cy="15" r="9" fill="none" stroke="#2a62f5" strokeWidth="6.5" />
        <path d="M16 17h8v6h-6q-3-2-2-6z" fill="#2a62f5" />
      </svg>
    ),
  },
  {
    name: '视频', open: true,
    art: (
      <svg width="31" height="31" viewBox="0 0 31 31" aria-hidden="true">
        <rect width="31" height="31" rx="6" fill="#f4f4f8" />
        <path d="M21 16L11 22" stroke="#12b7ff" strokeWidth="9" strokeLinecap="round" />
        <path d="M11 8l10 7" stroke="#ff2d6c" strokeWidth="9" strokeLinecap="round" />
      </svg>
    ),
  },
  { name: 'QQ音乐', open: true, art: <NoteDisc size={30} /> },
  {
    name: '压缩', open: true,
    art: (
      <svg width="30" height="26" viewBox="0 0 30 26" aria-hidden="true">
        <path d="M3 0h24l3 8H0z" fill="#28c0f0" />
        <path d="M1 8h28v5H1z" fill="#1572c8" />
        <path d="M0 13h30v6H0z" fill="#f0583a" />
        <path d="M1 19h28v6H1z" fill="#4cb82c" />
        <path d="M12 0h6v26h-6z" fill="#a85a28" />
        <path d="M11 10h8v7h-8z" fill="#eee" />
        <path d="M13 12v3h4v-3" stroke="#933" fill="none" />
      </svg>
    ),
  },
  { name: '微信', open: true, art: <Bubbles size={32} /> },
];

function Taskbar() {
  return (
    <footer className="relative flex h-[51px] shrink-0 bg-[linear-gradient(90deg,#2a1e1c,#2c2629_12%,#1f2728_24%,#1f2420_38%,#2c2419_50%,#25231c_62%,#222720_75%,#1f261f_88%,#20221d)] text-base text-white">
      <button aria-label="开始" className="flex w-[62px] items-center justify-center">
        <svg width="20" height="20" viewBox="0 0 20 20" fill="#fff" aria-hidden="true">
          <path d="M0 3l8-1v7.5H0zM9 2l11-2v9.5H9zM0 10.5h8V18l-8-1zM9 10.5h11V20L9 18z" />
        </svg>
      </button>
      <button aria-label="任务视图" className="mr-[3px] flex w-16 items-center justify-center">
        <svg width="24" height="22" viewBox="0 0 24 22" fill="none" stroke="#fff" strokeWidth="1.5" aria-hidden="true">
          <path d="M1 0v3h15V0M1 6h15v10H1zM1 22v-3h15v3M22 0v5M22 11v11" />
          <path d="M20 6h4v3h-4z" fill="#fff" stroke="none" />
        </svg>
      </button>
      {apps.map((a) => (
        <button key={a.name} aria-label={a.name} className="flex w-[63px] flex-col items-center">
          <span className="flex flex-1 items-center">{a.art}</span>
          <span className={clsx('-mt-0.5 h-0.5 w-[52px]', a.open && 'bg-[#93a9bb]')} />
        </button>
      ))}
      <button aria-label="音频编辑器" className="ml-px flex w-[62px] flex-col items-center bg-[#4c4e4c]">
        <span className="flex flex-1 items-center">
          <span className="flex size-[30px] items-center justify-center rounded border border-[#6a3df0] bg-black">
            <Logo size={26} />
          </span>
        </span>
        <span className="-mt-0.5 h-0.5 w-full bg-[#93a9bb]" />
      </button>

      <div className="ml-auto flex items-center">
        <button className="flex items-center gap-3 pr-7 text-lg">
          <svg width="30" height="42" viewBox="0 0 30 42" aria-hidden="true">
            <circle cx="14" cy="25" r="13" fill="#f0912a" />
            <circle cx="21" cy="14" r="8" fill="#c42b1c" />
            <text x="18" y="18" fontSize="11" fill="#fff">1</text>
          </svg>
          31°C&nbsp; 晴朗
        </button>
        <button aria-label="显示隐藏的图标" className="w-[30px] pl-1">
          <svg width="16" height="10" viewBox="0 0 16 10" fill="none" stroke="#fff" strokeWidth="1.5" aria-hidden="true"><path d="M0 9l8-8 8 8" /></svg>
        </button>
        <span className="flex w-[30px] justify-center"><NoteDisc size={20} /></span>
        <span className="flex w-[30px] justify-center"><Bubbles size={20} /></span>
        <span className="flex w-[30px] justify-center">
          <svg width="20" height="14" viewBox="0 0 20 14" fill="none" stroke="#fff" aria-hidden="true">
            <path d="M5 3h13v9H3V7M1 1v3h4V1M3 4v4" />
            <path d="M6 5h10v5H6zM18 6h2v3h-2z" fill="#fff" />
          </svg>
        </span>
        <span className="flex w-[30px] justify-center">
          <svg width="16" height="16" viewBox="0 0 16 16" fill="none" stroke="#fff" aria-hidden="true">
            <path d="M1 15Q1 3 15 1M5 15q0-8 10-10M9 15q0-5 6-6" />
            <circle cx="14" cy="14" r="1.5" fill="#fff" />
          </svg>
        </span>
        <span className="flex w-[30px] justify-center">
          <svg width="20" height="18" viewBox="0 0 20 18" fill="none" stroke="#fff" aria-hidden="true">
            <path d="M1 6h3l5-4v14l-5-4H1zM11 6q2 3 0 6M14 4q3 5 0 10" />
            <path d="M17 2q4 7 0 14" stroke="#777" />
          </svg>
        </span>
        <span className="w-[30px] text-center text-base">中</span>
        <span className="flex w-10 justify-center">
          <svg width="19" height="19" viewBox="0 0 19 19" aria-hidden="true">
            <rect width="19" height="19" rx="3" fill="#f04a1c" />
            <path d="M14 5q-8-3-9 1 0 2 5 3 4 1 3 4-2 3-9 0" stroke="#fff" strokeWidth="3" fill="none" />
          </svg>
        </span>
        <time className="w-[101px] pl-[5px] text-center text-base leading-6">
          <span className="block">15:42</span>
          <span className="block">2024/9/19</span>
        </time>
        <button aria-label="通知" className="flex w-[61px] justify-center">
          <svg width="34" height="34" viewBox="0 0 34 34" aria-hidden="true">
            <path d="M4 6h17v15h-9l-5 5v-5H4z" fill="#fff" />
            <circle cx="23" cy="24" r="9" fill="#2a2b29" stroke="#aaa" />
            <text x="19" y="29" fontSize="13" fontWeight="bold" fill="#fff">5</text>
          </svg>
        </button>
        <span className="h-full w-1 border-l border-[#999]" />
      </div>

      <div className="pointer-events-none absolute -top-4 right-8 flex w-[222px] justify-between text-5xl leading-[64px] font-bold text-black italic">
        <span>有</span>
        <span>趣</span>
        <span>论</span>
        <span>坛</span>
      </div>
    </footer>
  );
}

export default function App() {
  return (
    <div className="flex h-screen min-h-[720px] flex-col overflow-hidden bg-[#1f1f1f] font-['Noto_Sans','Noto_Sans_CJK_SC',sans-serif] text-[#c4c4c4]">
      <Header />
      <div className="flex min-h-0 flex-1 pr-3.5 pl-[15px]">
        <aside className="flex w-[414px] shrink-0 flex-col">
          <FilePanel />
          <div className="flex h-2 shrink-0 items-center justify-center gap-[3px] pr-24 pl-[70px]">
            {[0, 1, 2, 3].map((i) => (
              <span key={i} className="size-0.5 bg-[#777]" />
            ))}
          </div>
          <ToolsPanel />
        </aside>
        <div className="flex w-[7px] shrink-0 flex-col items-center justify-center gap-[3px]">
          {[0, 1, 2, 3].map((i) => (
            <span key={i} className="size-0.5 bg-[#777]" />
          ))}
        </div>
        <Editor />
      </div>
      <p className="h-[29px] shrink-0 pl-[26px] text-[15px] leading-[22px]">
        格式: MP3, 44100Hz, 16-位, 立体声, 长度: 02:19.351, 大小: 5.31 MB
      </p>
      <Taskbar />
    </div>
  );
}
